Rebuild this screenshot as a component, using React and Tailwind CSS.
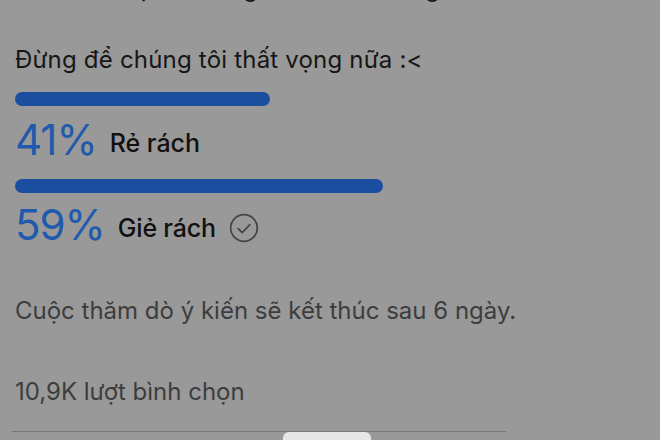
export default function App() {
  return (
    <div className="w-[660px] h-[440px] overflow-hidden bg-[#999999] relative font-['Inter','Noto_Sans',sans-serif]">
      <div className="flex flex-col px-[15px]">
        {/* clipped line from above */}
        <p className="mt-[-26px] text-[23px] leading-[30px] text-[#161616] whitespace-nowrap">
          Theo các bạn thì hàng nào tốt hơn và giá hời
        </p>

        <p className="mt-[39px] text-[24px] leading-[34px] text-[#161616] tracking-[0.2px]">
          Đừng để chúng tôi thất vọng nữa :&lt;
        </p>

        {/* option 1 */}
        <div className="mt-[15px] h-[14px] w-[255px] rounded-full bg-[#1b4e9f]" />
        <div className="mt-[12px] flex items-end gap-[13px] h-[44px]">
          <span className="text-[42px] leading-[44px] text-[#1f5aad] tracking-[-1px]">41%</span>
          <span className="mb-[4px] text-[25px] leading-[30px] font-medium text-[#111]">Rẻ rách</span>
        </div>

        {/* option 2 */}
        <div className="mt-[17px] h-[14px] w-[368px] rounded-full bg-[#1b4e9f]" />
        <div className="mt-[10px] flex items-end gap-[13px] h-[44px]">
          <span className="text-[42px] leading-[44px] text-[#1f5aad] tracking-[-1px]">59%</span>
          <span className="mb-[4px] text-[25px] leading-[30px] font-medium text-[#111] tracking-[-0.2px]">Giẻ rách</span>
          <svg className="mb-[4px]" width="30" height="30" viewBox="0 0 30 30" fill="none">
            <circle cx="15" cy="15" r="13.3" stroke="#444" strokeWidth="1.7" />
            <path d="M9.2 15.6l4 4 7.6-8" stroke="#444" strokeWidth="1.7" strokeLinecap="round" strokeLinejoin="round" />
          </svg>
        </div>

        <p className="mt-[49px] text-[24px] leading-[30px] text-[#3d3d3d]">
          Cuộc thăm dò ý kiến sẽ kết thúc sau 6 ngày.
        </p>

        <p className="mt-[51px] text-[24px] leading-[30px] text-[#3d3d3d]">
          10,9K lượt bình chọn
        </p>

        <div className="mt-[24px] ml-[-3px] w-[494px] h-px bg-[#777]" />
      </div>
      <div className="absolute left-[283px] top-[432px] w-[88px] h-[12px] rounded-t-[6px] bg-[#e6e6e6]" />
    </div>
  );
}
